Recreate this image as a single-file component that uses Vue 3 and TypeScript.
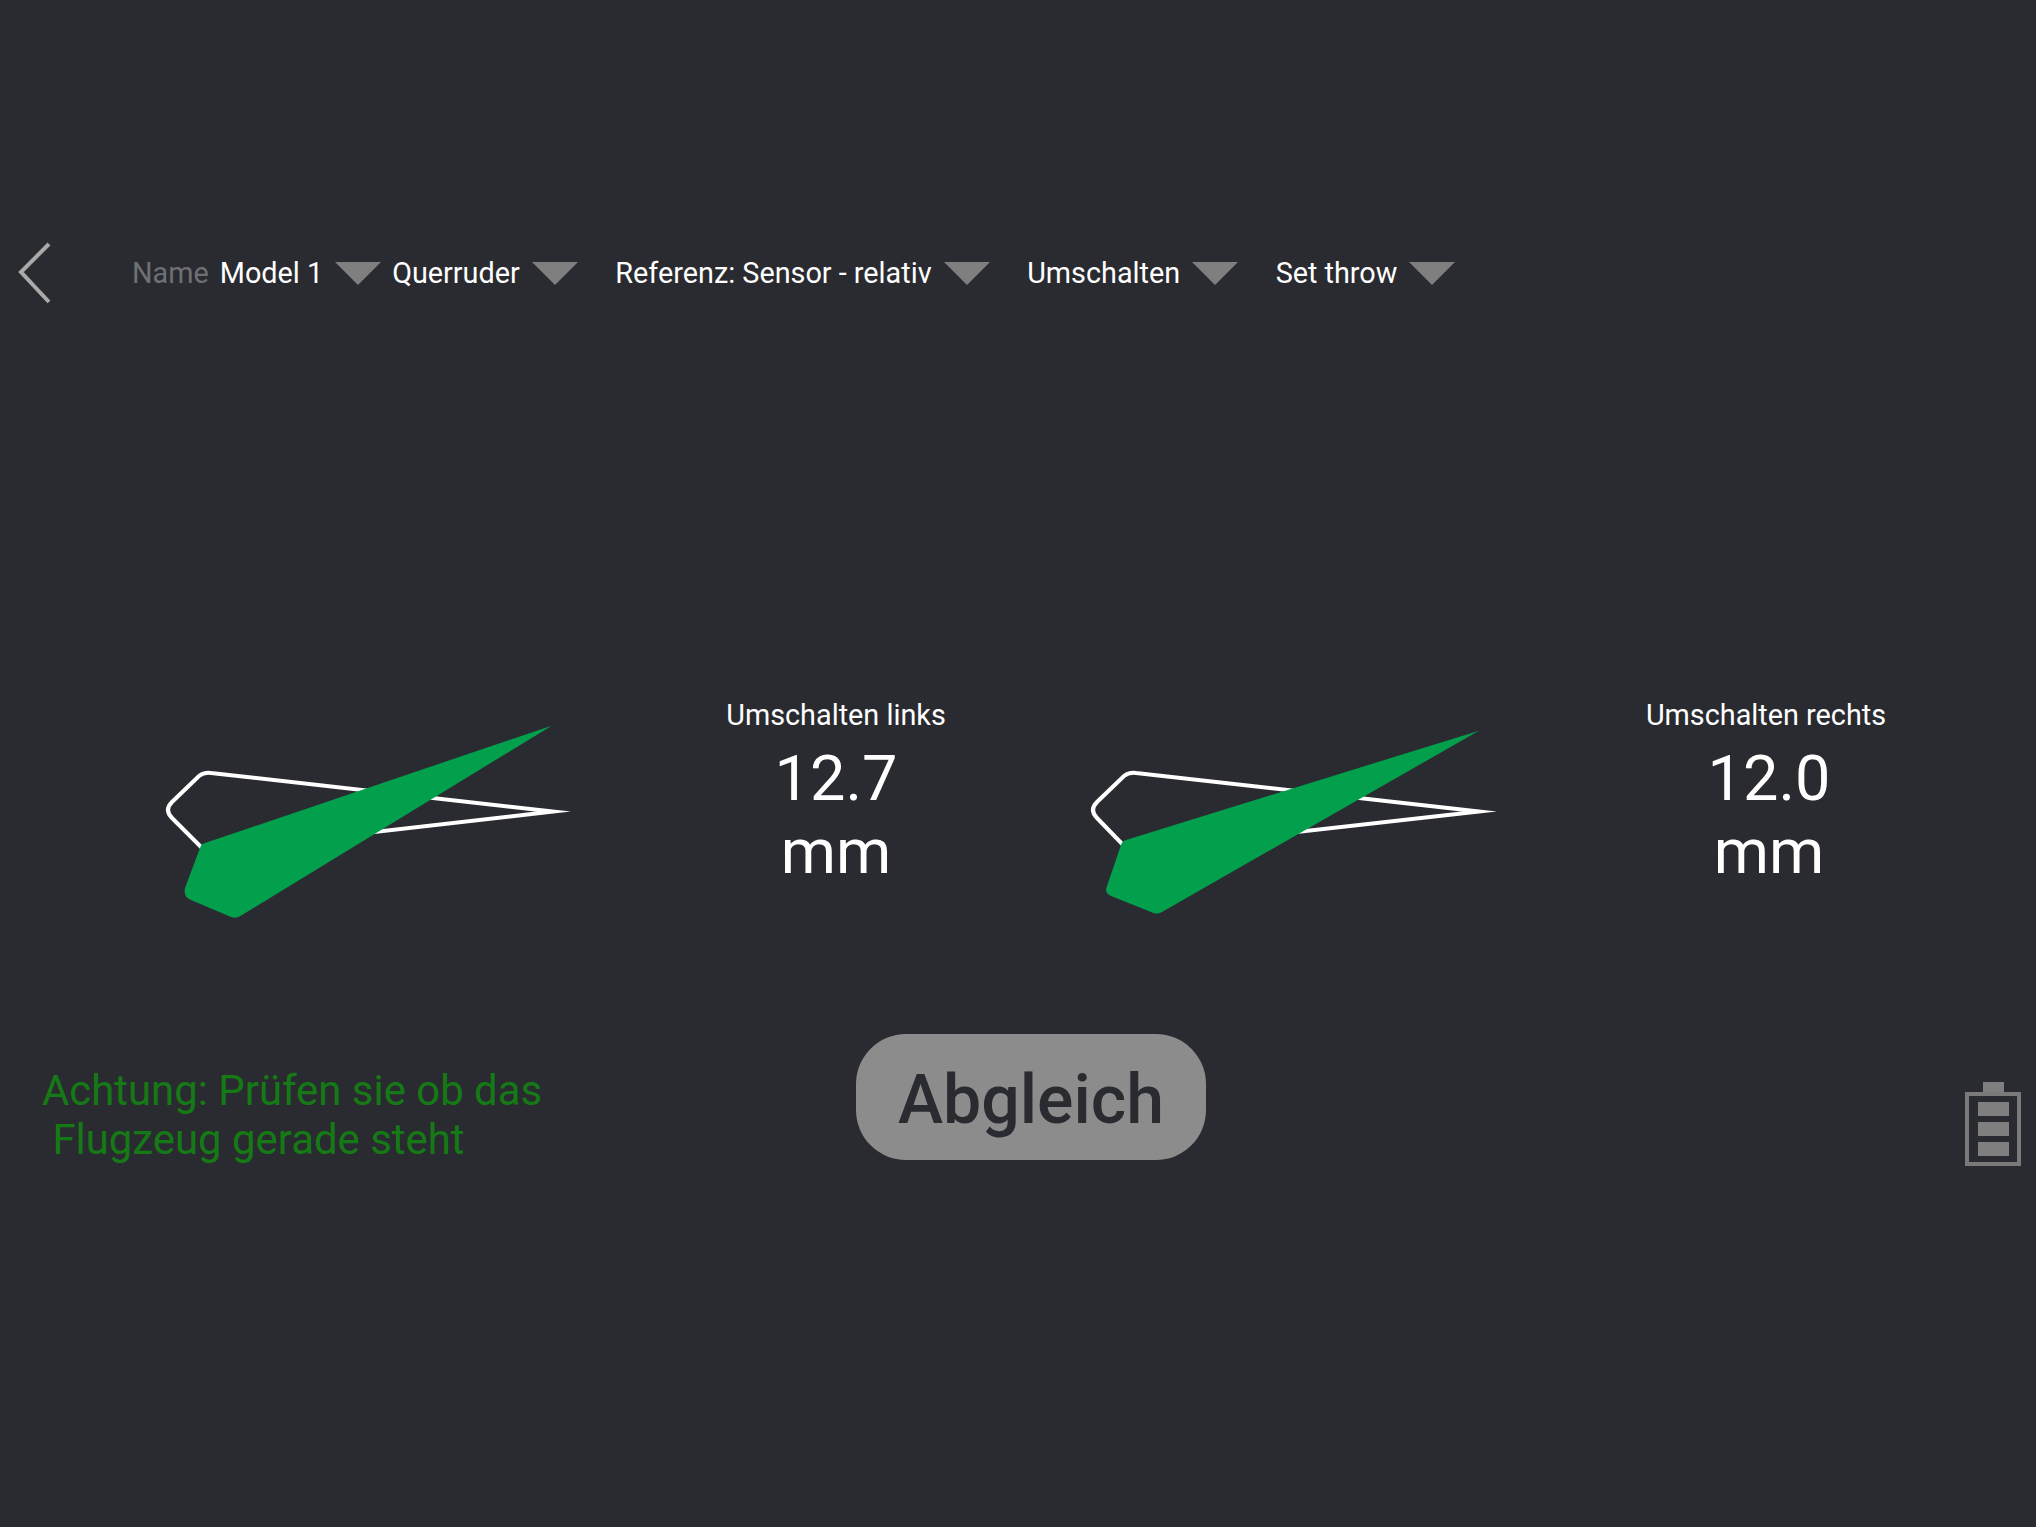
<script setup lang="ts">
const menus = ['Querruder', 'Referenz: Sensor - relativ', 'Umschalten', 'Set throw']

const warning = 'Achtung: Prüfen sie ob das\n Flugzeug gerade steht'

const gauges = [
  {
    label: 'Umschalten links',
    value: '12.7',
    viewBox: '150 710 450 220',
    outline: 'M199 776 Q204 772 211 773 L553 811.5 L225 849 L203 849 L172 818 Q164 810 172 802 Z',
    wing: 'M551.7 725.7 L205 843 Q201 844 200 848 L185 888 Q183 897 191 900 L231 917 Q237 919 242 915 Z',
    shift: false,
  },
  {
    label: 'Umschalten rechts',
    value: '12.0',
    viewBox: '1080 710 450 220',
    outline: 'M1124 776 Q1129 772 1136 773 L1479 811.5 L1150 848.5 L1127 849 L1097 818 Q1089 810 1097 802 Z',
    wing: 'M1479 730.7 L1126 840 Q1122 841 1121 845 L1107 886 Q1104 893 1111 896 L1151 912 Q1157 915 1162 912 Z',
    shift: true,
  },
]
</script>

<template>
  <div class="page">
    <header class="toolbar">
      <svg class="back" width="36" height="62" viewBox="0 0 36 62">
        <path d="M33 2 L5 30 L33 60" />
      </svg>
      <span class="name-label">Name</span>
      <span class="item">Model 1</span>
      <i class="caret" />
      <div v-for="(menu, index) in menus" :key="menu" class="menu" :class="{ wide: index > 0 }">
        <span class="item">{{ menu }}</span>
        <i class="caret" />
      </div>
    </header>

    <section class="gauges">
      <div v-for="gauge in gauges" :key="gauge.label" class="gauge">
        <svg class="plane" width="450" height="220" :viewBox="gauge.viewBox">
          <path class="outline" :d="gauge.outline" />
          <path class="wing" :d="gauge.wing" />
        </svg>
        <div class="readout">
          <div class="label">{{ gauge.label }}</div>
          <div class="value" :class="{ shifted: gauge.shift }">{{ gauge.value }}<br />mm</div>
        </div>
      </div>
    </section>

    <section class="actions">
      <p class="warning">{{ warning }}</p>
      <button class="calibrate">Abgleich</button>
      <div class="battery">
        <div class="battery-cap" />
        <div class="battery-body">
          <div v-for="n in 3" :key="n" class="battery-bar" />
        </div>
      </div>
    </section>
  </div>
</template>

<style>
html,
body {
  margin: 0;
  background: #2a2b30;
}
</style>

<style scoped>
.page {
  width: 2036px;
  height: 1527px;
  overflow: hidden;
  background: #2a2b30;
  color: #fff;
  font-family: Roboto, "Liberation Sans", sans-serif;
  font-size: 28.8px;
  box-sizing: border-box;
  padding-top: 242px;
}

.toolbar {
  display: flex;
  align-items: center;
  height: 62px;
  padding-left: 16px;
}

.back {
  margin-right: 80px;
  flex: none;
}

.back path {
  fill: none;
  stroke: #a9a9a9;
  stroke-width: 4;
}

.name-label {
  color: #6f7074;
  margin-right: 11px;
}

.item {
  white-space: nowrap;
}

.caret {
  display: block;
  margin-left: 12px;
  width: 0;
  height: 0;
  border-left: 23px solid transparent;
  border-right: 23px solid transparent;
  border-top: 23px solid #7f7f7f;
}

.menu {
  display: flex;
  align-items: center;
  margin-left: 11px;
}

.menu.wide {
  margin-left: 37.5px;
}

.gauges {
  display: flex;
  gap: 94px;
  margin-top: 394px;
  padding-left: 150px;
}

.gauge {
  display: flex;
  gap: 86px;
}

.plane {
  margin-top: 12px;
  flex: none;
}

.outline {
  fill: none;
  stroke: #fff;
  stroke-width: 4;
  stroke-miterlimit: 30;
}

.wing {
  fill: #029f4d;
}

.readout {
  width: 300px;
  text-align: center;
}

.value {
  font-size: 63px;
  line-height: 73px;
  margin-top: 10px;
}

.value.shifted {
  padding-left: 6px;
}

.actions {
  display: flex;
  align-items: flex-start;
  margin-top: 104px;
  padding-left: 42px;
  padding-right: 15px;
}

.warning {
  width: 814px;
  flex: none;
  margin: 32px 0 0;
  color: #157a15;
  font-size: 41.9px;
  line-height: 49px;
  white-space: pre;
}

.calibrate {
  width: 350px;
  height: 126px;
  border: none;
  border-radius: 50px;
  background: #8c8c8c;
  color: #2a2b30;
  font-family: inherit;
  font-size: 68px;
  font-weight: 500;
  padding: 5px 0 0;
}

.battery {
  margin-left: auto;
  margin-top: 48px;
  width: 56px;
  display: flex;
  flex-direction: column;
  align-items: center;
}

.battery-cap {
  width: 21px;
  height: 10px;
  background: #7f7f7f;
}

.battery-body {
  box-sizing: border-box;
  width: 56px;
  height: 74px;
  border: 4px solid #7a7a7a;
  display: flex;
  flex-direction: column;
  align-items: center;
  gap: 6px;
  padding-top: 6px;
}

.battery-bar {
  width: 31px;
  height: 14px;
  background: #7f7f7f;
}
</style>
